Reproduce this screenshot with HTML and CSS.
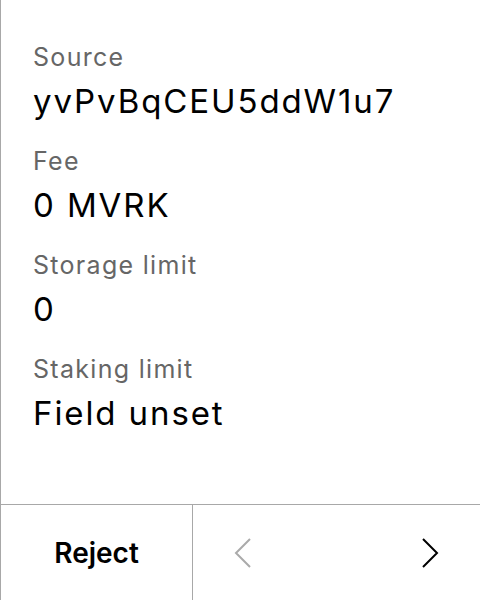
FILE: index.html
```html
<!DOCTYPE html>
<html>
<head>
<meta charset="utf-8">
<link rel="stylesheet" href="styles.css">
</head>
<body>
<div class="screen">
  <div class="fields">
    <div class="field">
      <div class="label">Source</div>
      <div class="value">yvPvBqCEU5ddW1u7</div>
    </div>
    <div class="field">
      <div class="label">Fee</div>
      <div class="value">0 MVRK</div>
    </div>
    <div class="field">
      <div class="label">Storage limit</div>
      <div class="value">0</div>
    </div>
    <div class="field">
      <div class="label">Staking limit</div>
      <div class="value">Field unset</div>
    </div>
  </div>
  <div class="footer">
    <div class="reject">Reject</div>
    <div class="nav">
      <svg class="chev prev" width="18" height="32" viewBox="0 0 18 32"><polyline points="16,2 2,16 16,30" fill="none" stroke="currentColor" stroke-width="2"/></svg>
      <svg class="chev next" width="18" height="32" viewBox="0 0 18 32"><polyline points="2,2 16,16 2,30" fill="none" stroke="currentColor" stroke-width="2"/></svg>
    </div>
  </div>
</div>
</body>
</html>
```
FILE: styles.css
```css
html, body {
  margin: 0;
  padding: 0;
  background: #fff;
}
.screen {
  width: 480px;
  height: 600px;
  box-sizing: border-box;
  border-left: 1px solid #a8a8a8;
  display: flex;
  flex-direction: column;
  font-family: Inter, "Noto Sans", sans-serif;
  color: #000;
}
.fields {
  flex: 1;
  display: flex;
  flex-direction: column;
  gap: 16px;
  padding: 37px 0 0 32px;
}
.label {
  font-size: 25px;
  line-height: 40px;
  letter-spacing: 1.3px;
  color: #666;
}
.value {
  font-size: 33px;
  line-height: 48px;
  letter-spacing: 1.9px;
}
.footer {
  height: 96px;
  box-sizing: border-box;
  border-top: 1px solid #a8a8a8;
  display: flex;
}
.reject {
  width: 192px;
  box-sizing: border-box;
  border-right: 1px solid #a8a8a8;
  display: flex;
  align-items: center;
  justify-content: center;
  font-size: 28px;
  font-weight: 600;
}
.nav {
  flex: 1;
  display: flex;
  align-items: center;
  justify-content: space-between;
  padding: 0 41px;
}
.prev { color: #aaa; }
.next { color: #000; }
```
